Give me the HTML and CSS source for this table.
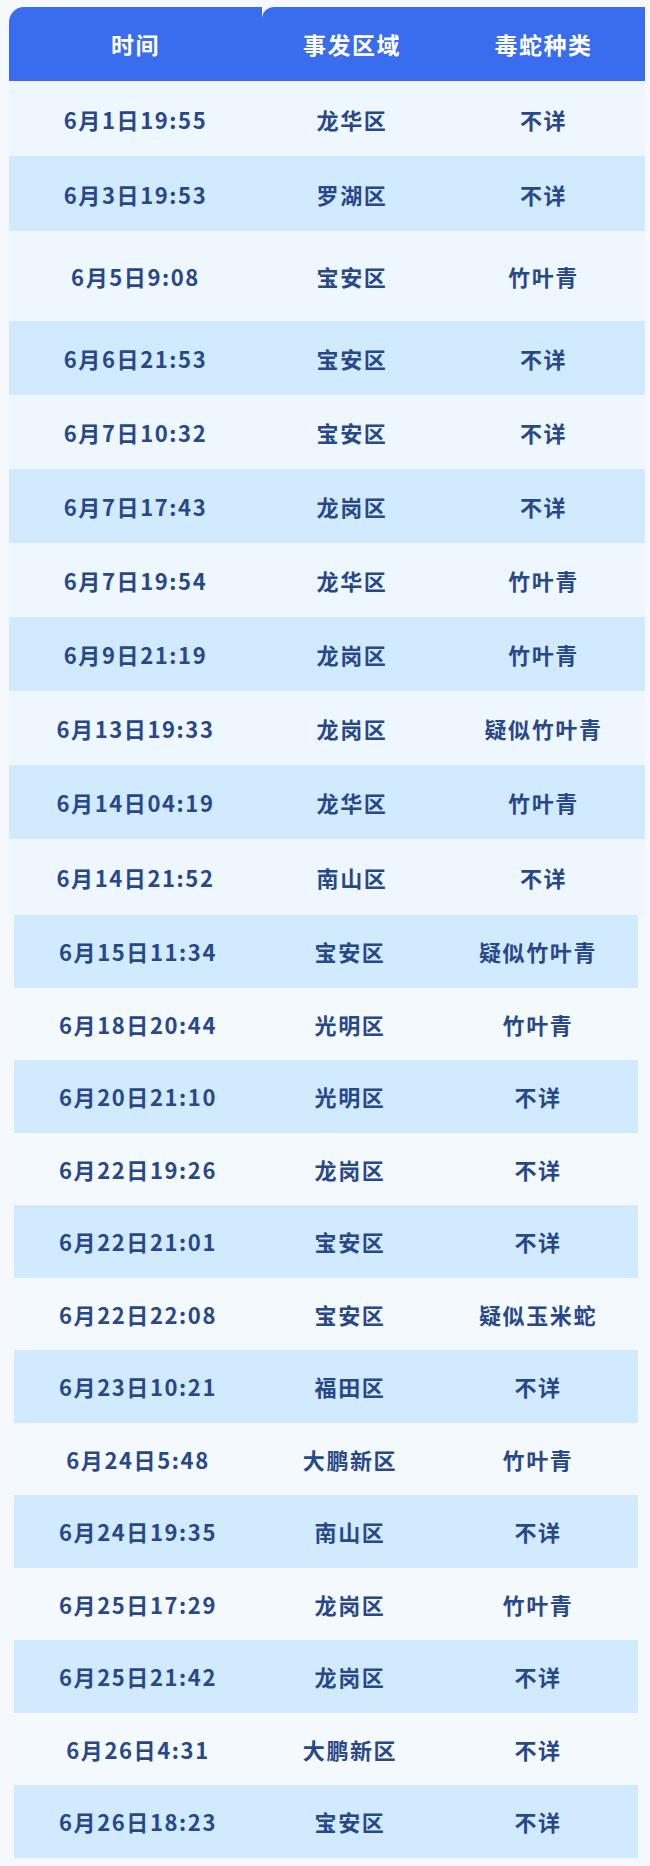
FILE: index.html
```html
<!DOCTYPE html>
<html lang="zh">
<head>
<meta charset="utf-8">
<title>毒蛇咬伤事件</title>
<link rel="stylesheet" href="styles.css">
</head>
<body>
<div class="tbl tbl-a">
  <div class="head">
    <div class="h-tab h-first"><span>时间</span></div>
    <div class="h-tab h-rest">
      <span class="h-mid">事发区域</span>
      <span class="h-last">毒蛇种类</span>
    </div>
  </div>
  <div class="row light r75"><span>6月1日19:55</span><span>龙华区</span><span>不详</span></div>
  <div class="row dark r75"><span>6月3日19:53</span><span>罗湖区</span><span>不详</span></div>
  <div class="row light r90"><span>6月5日9:08</span><span>宝安区</span><span>竹叶青</span></div>
  <div class="row dark"><span>6月6日21:53</span><span>宝安区</span><span>不详</span></div>
  <div class="row light"><span>6月7日10:32</span><span>宝安区</span><span>不详</span></div>
  <div class="row dark"><span>6月7日17:43</span><span>龙岗区</span><span>不详</span></div>
  <div class="row light"><span>6月7日19:54</span><span>龙华区</span><span>竹叶青</span></div>
  <div class="row dark"><span>6月9日21:19</span><span>龙岗区</span><span>竹叶青</span></div>
  <div class="row light"><span>6月13日19:33</span><span>龙岗区</span><span>疑似竹叶青</span></div>
  <div class="row dark"><span>6月14日04:19</span><span>龙华区</span><span>竹叶青</span></div>
  <div class="row light r76"><span>6月14日21:52</span><span>南山区</span><span>不详</span></div>
</div>
<div class="tbl tbl-b">
  <div class="row dark"><span>6月15日11:34</span><span>宝安区</span><span>疑似竹叶青</span></div>
  <div class="row light"><span>6月18日20:44</span><span>光明区</span><span>竹叶青</span></div>
  <div class="row dark"><span>6月20日21:10</span><span>光明区</span><span>不详</span></div>
  <div class="row light"><span>6月22日19:26</span><span>龙岗区</span><span>不详</span></div>
  <div class="row dark"><span>6月22日21:01</span><span>宝安区</span><span>不详</span></div>
  <div class="row light"><span>6月22日22:08</span><span>宝安区</span><span>疑似玉米蛇</span></div>
  <div class="row dark"><span>6月23日10:21</span><span>福田区</span><span>不详</span></div>
  <div class="row light"><span>6月24日5:48</span><span>大鹏新区</span><span>竹叶青</span></div>
  <div class="row dark"><span>6月24日19:35</span><span>南山区</span><span>不详</span></div>
  <div class="row light"><span>6月25日17:29</span><span>龙岗区</span><span>竹叶青</span></div>
  <div class="row dark"><span>6月25日21:42</span><span>龙岗区</span><span>不详</span></div>
  <div class="row light"><span>6月26日4:31</span><span>大鹏新区</span><span>不详</span></div>
  <div class="row dark"><span>6月26日18:23</span><span>宝安区</span><span>不详</span></div>
</div>
</body>
</html>
```

FILE: styles.css
```css
html, body {
  margin: 0;
  padding: 0;
  background: #f5f9fe;
}
body {
  padding-top: 7px;
  font-family: "Noto Sans CJK SC", "Noto Sans", sans-serif;
  font-weight: 700;
  color: #28488a;
}
.tbl-a {
  margin-left: 9px;
  width: 636px;
}
.tbl-b {
  margin-left: 14px;
  width: 624px;
}
.head {
  display: flex;
  height: 74px;
}
.h-tab {
  background: #3a6cee;
  color: #ffffff;
  font-size: 23px;
  letter-spacing: 1.5px;
  display: flex;
  align-items: center;
}
.h-first {
  width: 253px;
  justify-content: center;
  border-top-left-radius: 15px;
}
.h-rest {
  flex: 1;
  border-top-left-radius: 12px;
}
.h-mid {
  width: 180px;
  text-align: center;
}
.h-last {
  flex: 1;
  text-align: center;
}
.row {
  display: grid;
  align-items: center;
  height: 74px;
  font-size: 22px;
  letter-spacing: 1.6px;
}
.tbl-a .row {
  grid-template-columns: 253px 180px 1fr;
}
.tbl-b .row {
  grid-template-columns: 248px 176px 1fr;
  height: 72.5px;
}
.row span {
  text-align: center;
}
.row.r75 { height: 75px; }
.row.r90 { height: 90px; }
.row.r76 { height: 76px; }
.tbl-a .light { background: #eef6fe; }
.tbl-b .light { background: #f4f9fe; }
.dark { background: #d1eafd; }
```
